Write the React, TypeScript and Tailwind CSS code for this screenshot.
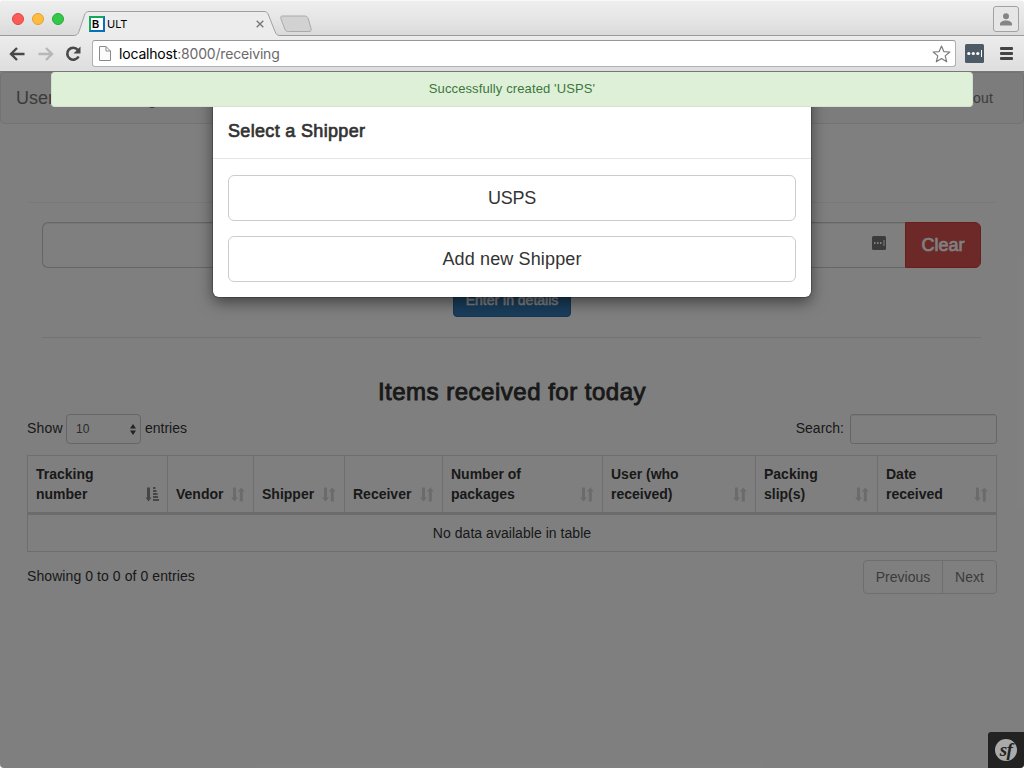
import React from "react";

const SANS = "font-['Liberation_Sans',Arial,sans-serif]";

const columns = [
  "Tracking\nnumber",
  "Vendor",
  "Shipper",
  "Receiver",
  "Number of\npackages",
  "User (who\nreceived)",
  "Packing\nslip(s)",
  "Date\nreceived",
];

function SortBoth() {
  return (
    <svg width="14" height="15" viewBox="0 0 14 15" fill="#d6d6d6" className="shrink-0">
      <path d="M2 0.5h3v10h2L3.5 14.5 0 10.5h2z" />
      <path d="M8.8 14.5h3v-10h2L10.3 0.5 6.8 4.5h2z" />
    </svg>
  );
}

function SortAsc() {
  return (
    <svg width="14" height="15" viewBox="0 0 14 15" fill="#8c8c8c" className="shrink-0">
      <path d="M2 0.5h3v10h1.500L3.5 14.5 0.500 10.5h1.500z" />
      <path d="M8 0h2.500v2H8zM8 3h3.500v2H8zM8 6h4.500v2H8zM8 9h5v2H8zM8 12h6v2H8z" />
    </svg>
  );
}

function TabStrip() {
  return (
    <div className="flex h-[36px] items-start bg-linear-to-b from-[#efefef] via-[#e6e6e6] to-[#d9d9d9] shadow-[inset_0_1px_0_#f8f8f8,inset_0_-1px_0_#9b9b9b]">
      <div className="flex gap-2 pl-[12px] pt-[13px]">
        <span className="size-[12px] rounded-full border border-[#e2463f] bg-[#fc5b57]" />
        <span className="size-[12px] rounded-full border border-[#e1a12f] bg-[#fdbc40]" />
        <span className="size-[12px] rounded-full border border-[#27aa35] bg-[#34c84a]" />
      </div>
      <div className="relative ml-[8px] h-[36px] w-[212px]">
        <svg className="absolute inset-0" width="212" height="36" viewBox="0 0 212 36">
          <path d="M1 36v-.5c4 0 5-1.500 6-4L12.500 15c1-2.500 2-3.500 4.500-3.500H192c2.500 0 3.500 1 4.500 3.500L203 31.500c1 2.500 2 4 5 4V36z" fill="#ececec" />
          <path d="M1 35.500c4 0 5-1.500 6-4L12.500 15c1-2.500 2-3.500 4.500-3.500H192c2.500 0 3.500 1 4.500 3.500L203 31.500c1 2.500 2 4 5 4" fill="none" stroke="#a0a0a0" />
        </svg>
        <div className="relative flex h-[36px] items-center pl-[17px] pt-[12px]">
          <div className="flex size-[16px] items-end border-2 border-t-[#12a85c] border-l-[#12a85c] border-r-[#0a6dbf] border-b-[#0a6dbf] bg-white pl-px font-['Liberation_Sans',sans-serif] text-[10px] leading-[10px] font-bold text-black">B</div>
          <span className="ml-[2px] font-[Inter,sans-serif] text-[11px] text-black">ULT</span>
          <svg className="ml-[129px]" width="8" height="8" viewBox="0 0 8 8" stroke="#777" strokeWidth="1.400"><path d="M.7.7l6.600 6.600M7.300.7L.7 7.300" /></svg>
        </div>
      </div>
      <svg className="-ml-[5px] mt-[15px]" width="34" height="18" viewBox="0 0 34 18">
        <path d="M3.500 1h22c2 0 3 .7 3.700 2.500l2.800 10c.6 2-.2 3-2 3H9.500c-2 0-3-.7-3.700-2.500L1.800 3.500C1.300 2 2 1 3.500 1z" fill="#d2d2d2" stroke="#aaa" />
      </svg>
      <div className="mt-[6px] mr-[5px] ml-auto flex size-[26px] items-center justify-center rounded-[3px] border border-[#a2a2a2] bg-[#e6e6e6]">
        <svg width="14" height="13" viewBox="0 0 14 13" fill="#858585"><circle cx="7" cy="3.200" r="3" /><path d="M1 12.500V11c0-2 3-3.500 6-3.500s6 1.500 6 3.500v1.500z" /></svg>
      </div>
    </div>
  );
}

function Toolbar() {
  return (
    <div className="flex h-[36px] items-center border-b border-[#777] bg-linear-to-b from-[#ececec] to-[#dedede] pl-[9px]">
      <svg width="16" height="14" viewBox="0 0 16 14" fill="none" stroke="#484848" strokeWidth="2.400"><path d="M15.500 7H2.500M8 1L2 7l6 6" /></svg>
      <svg className="ml-[13px]" width="16" height="14" viewBox="0 0 16 14" fill="none" stroke="#b7b7b7" strokeWidth="2.400"><path d="M.5 7h13M8 1l6 6-6 6" /></svg>
      <svg className="ml-[11px]" width="16" height="16" viewBox="0 0 16 16" fill="none"><path d="M12.800 3.800A6 6 0 1 0 13.600 10.500" stroke="#484848" strokeWidth="2.600" /><path d="M15.500.5v7h-7z" fill="#484848" /></svg>
      <div className="ml-[11px] flex h-[27px] w-[864px] items-center rounded-[3px] border border-[#b0b0b0] border-t-[#989898] bg-white pr-[4px] pl-[6px]">
        <svg width="12" height="15" viewBox="0 0 12 15" fill="#fbfbfb" stroke="#8a8a8a"><path d="M.5.5H7L11.500 5v9.500H.5zM7 .5V5h4.500" /></svg>
        <span className="ml-[8px] font-[Inter,sans-serif] text-[14px] tracking-[-0.18px] text-[#6a6a6a]"><span className="text-black">localhost</span>:8000/receiving</span>
        <svg className="ml-auto" width="19" height="18" viewBox="0 0 19 18" fill="white" stroke="#7c7c7c" strokeWidth="1.200" strokeLinejoin="round"><path d="M9.500 1l2.300 5.600 6 .4-4.600 3.900 1.500 5.900-5.200-3.300-5.200 3.300 1.500-5.900L1.200 7l6-.4z" /></svg>
      </div>
      <svg className="ml-[9px]" width="19" height="19" viewBox="0 0 19 19"><rect width="19" height="19" rx="1.500" fill="#4d5b67" /><g fill="white"><circle cx="3.800" cy="9.500" r="1.600" /><circle cx="8.300" cy="9.500" r="1.600" /><circle cx="12.800" cy="9.500" r="1.600" /><path d="M16 6h1v7h-1z" /></g></svg>
      <svg className="ml-[16px]" width="13" height="13" viewBox="0 0 13 13" fill="#444"><rect width="13" height="3" rx="1" /><rect y="5" width="13" height="3" rx="1" /><rect y="10" width="13" height="3" rx="1" /></svg>
    </div>
  );
}

function ReceivingPage() {
  return (
    <div className="flex h-full flex-col bg-white text-[14px] leading-[20px] text-[#333]">
      <nav className="flex h-[52px] items-center justify-between rounded-[4px] border border-[#e7e7e7] bg-[#f8f8f8] pr-[30px] pl-[15px] text-[#777]">
        <div className="flex gap-[24px] text-[18px]"><span>User</span><span>Receiving</span></div>
        <span className="tracking-[0.2px]">Logout</span>
      </nav>
      <div className="mx-[27px] h-[79px] rounded-b-[4px] border-b border-[#f0f0f0]" />
      <div className="mx-[42px] mt-[19px] flex h-[46px] w-[939px]">
        <div className="flex flex-1 items-start justify-end rounded-l-[6px] border border-r-0 border-[#ccc] pt-[13px] pr-[19px] shadow-[inset_0_1px_1px_rgba(0,0,0,0.075)]">
          <svg width="14" height="14" viewBox="0 0 14 14"><rect width="14" height="14" rx="1.500" fill="#777" /><g fill="white"><path d="M2 6h1.500v2H2zM5 6h1.500v2H5zM8 6h1.500v2H8zM11.500 4h1v6h-1z" /></g></svg>
        </div>
        <button className="w-[76px] rounded-r-[6px] border border-[#d43f3a] bg-[#d9534f] text-[18px] text-white [-webkit-text-stroke:0.7px_white]">Clear</button>
      </div>
      <button className="mt-[15px] h-[34px] w-[118px] self-center rounded-[4px] border border-[#2e6da4] bg-[#337ab7] text-[14px] text-white [-webkit-text-stroke:0.5px_white]">Enter in details</button>
      <hr className="mx-[42px] mt-[20px] w-[939px] border-[#e7e7e7]" />
      <h3 className="mt-[41px] text-center text-[24px] leading-[26px] tracking-[0.5px] text-[#333] [-webkit-text-stroke:0.9px_#333]">Items received for today</h3>
      <div className="mx-[27px] mt-[9px] flex h-[30px] items-center">
        <span className="mb-[2px] w-[39px] tracking-[0.2px]">Show</span>
        <div className="flex h-[30px] w-[75px] items-center justify-between rounded-[4px] border border-[#ccc] pr-[4px] pl-[9px] text-[12px] text-[#555]">
          <span>10</span>
          <svg width="6" height="11" viewBox="0 0 6 11" fill="#444"><path d="M3 0l3 4.500H0zM0 6.500h6L3 11z" /></svg>
        </div>
        <span className="mb-[2px] ml-[4px]">entries</span>
        <span className="mr-[6px] mb-[2px] ml-auto">Search:</span>
        <div className="h-[30px] w-[147px] rounded-[3px] border border-[#ccc] shadow-[inset_0_1px_1px_rgba(0,0,0,0.075)]" />
      </div>
      <div className="mx-[27px] mt-[11px] w-[970px] border border-l-0 border-[#ddd]">
        <div className="grid h-[59px] grid-cols-[140px_86px_91px_98px_160px_153px_122px_1fr] border-b-[3px] border-[#d9d9d9]">
          {columns.map((label, i) => (
            <div key={label} className="flex items-end justify-between border-l border-[#ddd] pr-[8px] pb-[8px] pl-[8px] font-bold">
              <span className="whitespace-pre">{label}</span>
              <span className="mb-[2px]">{i === 0 ? <SortAsc /> : <SortBoth />}</span>
            </div>
          ))}
        </div>
        <div className="flex h-[36px] items-center justify-center border-l border-[#ddd] tracking-[0.04px]">No data available in table</div>
      </div>
      <div className="mx-[27px] mt-[8px] flex items-start justify-between">
        <span className="mt-[6px] tracking-[0.08px]">Showing 0 to 0 of 0 entries</span>
        <div className="flex h-[34px] w-[134px] rounded-[4px] border border-[#ddd] text-[#777]">
          <span className="flex w-[78px] items-center justify-center">Previous</span>
          <span className="flex flex-1 items-center justify-center border-l border-[#ddd]">Next</span>
        </div>
      </div>
    </div>
  );
}

function ShipperModal() {
  return (
    <div className="absolute top-[-42px] left-[213px] h-[267px] w-[598px] rounded-[6px] bg-white pt-[68px] text-[#333] shadow-[0_5px_15px_rgba(0,0,0,0.5),0_0_0_1px_rgba(0,0,0,0.2)]">
      <h4 className="h-[61px] border-b border-[#e5e5e5] px-[15px] pt-[23px] text-[18px] leading-[20px] tracking-[0.33px] [-webkit-text-stroke:0.7px_#333]">Select a Shipper</h4>
      <div className="flex flex-col gap-[15px] px-[15px] pt-[16px]">
        <button className="h-[46px] rounded-[6px] border border-[#ccc] text-[18px] tracking-[-0.2px]">USPS</button>
        <button className="h-[46px] rounded-[6px] border border-[#ccc] text-[18px] tracking-[0.14px]">Add new Shipper</button>
      </div>
    </div>
  );
}

export default function App() {
  return (
    <div className={"flex h-[768px] w-[1024px] flex-col overflow-hidden rounded-[4px] " + SANS}>
      <TabStrip />
      <Toolbar />
      <main className="relative min-h-0 flex-1 overflow-hidden">
        <ReceivingPage />
        <div className="absolute inset-0 bg-black/50" />
        <ShipperModal />
        <div className="absolute top-0 left-[51px] flex h-[35px] w-[922px] justify-center rounded-[4px] border border-t-0 border-[#d5e0d1] bg-[#dff0d8] pt-[7px] text-[13px] leading-[19px] tracking-[0.12px] text-[#3c763d]">Successfully created 'USPS'</div>
        <div className="absolute right-0 bottom-0 flex size-[36px] items-center justify-center rounded-tl-[3px] bg-[#222]">
          <div className="flex size-[22px] items-center justify-center rounded-full bg-[#aaa] pb-[2px] font-['Liberation_Serif',serif] text-[19px] leading-none font-bold tracking-[-0.5px] text-[#222] italic">sf</div>
        </div>
      </main>
    </div>
  );
}
